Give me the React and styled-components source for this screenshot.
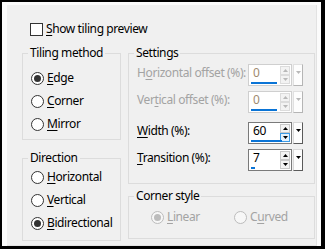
import React from "react";
import styled, { createGlobalStyle } from "styled-components";

const Global = createGlobalStyle`
  html, body { margin: 0; padding: 0; background: #fff; }
  body {
    font-family: "Segoe UI", "Noto Sans", "Open Sans", sans-serif;
    font-size: 12px;
    letter-spacing: -0.4px;
    color: #000;
  }
`;

const Frame = styled.div`
  width: 325px;
  height: 249px;
  box-sizing: border-box;
  border-style: solid;
  border-color: #000;
  border-width: 2px 4px 3px 2px;
  background: #fbfbfb;
  padding: 3px 4px 0 5px;
  display: flex;
`;

const Panel = styled.div`
  flex: 1;
  background: #f0f0f0;
  border-right: 1px solid #e2e2e2;
  border-bottom: 1px solid #e2e2e2;
  padding: 16px 1px 0 15px;
  display: flex;
  flex-direction: column;
`;

const Line = styled.label`
  display: flex;
  align-items: center;
  height: 16px;
  line-height: 16px;
  gap: 3px;
  white-space: nowrap;
  color: ${(p) => (p.$disabled ? "#a3a3a3" : "#000")};
`;

const TopRow = styled(Line)`
  margin-left: 8px;
`;

const Box = styled.span`
  width: 13px;
  height: 13px;
  box-sizing: border-box;
  border: 1px solid #333;
  background: #fff;
  flex: none;
`;

const Circle = styled.span`
  width: 13px;
  height: 13px;
  box-sizing: border-box;
  border-radius: 50%;
  border: 1px solid ${(p) => (p.$disabled ? "#bcbcbc" : "#333")};
  background: ${(p) => (p.$disabled ? "#f7f7f7" : "#fff")};
  flex: none;
  display: flex;
  align-items: center;
  justify-content: center;
  &::after {
    content: "";
    display: ${(p) => (p.$checked ? "block" : "none")};
    width: 7px;
    height: 7px;
    border-radius: 50%;
    background: ${(p) => (p.$disabled ? "#bcbcbc" : "#333")};
  }
`;

const Key = styled.span`
  text-decoration: underline;
  text-underline-offset: 2px;
`;

const Columns = styled.div`
  display: flex;
  gap: 7px;
  margin-top: 8px;
`;

const Column = styled.div`
  display: flex;
  flex-direction: column;
  width: ${(p) => p.$w}px;
  gap: ${(p) => p.$gap}px;
`;

const Group = styled.fieldset`
  margin: 0;
  min-width: 0;
  border: 1px solid #dcdcdc;
  padding: 0;
`;

const Legend = styled.legend`
  padding: 0 2px;
  margin-left: 5px;
  line-height: 16px;
  height: 16px;
`;

const Body = styled.div`
  padding: ${(p) => p.$pad};
  display: flex;
  flex-direction: column;
  gap: ${(p) => p.$gap || 0}px;
`;

const SettingRow = styled.div`
  display: flex;
  align-items: flex-start;
  justify-content: space-between;
  height: 22px;
  margin-top: ${(p) => p.$mt}px;
`;

const SettingLabel = styled.span`
  line-height: 16px;
  padding-top: 1px;
  white-space: nowrap;
  color: ${(p) => (p.$disabled ? "#a3a3a3" : "#000")};
`;

const Spin = styled.div`
  display: flex;
  width: 55px;
  height: 22px;
  flex: none;
`;

const Field = styled.div`
  position: relative;
  flex: 1;
  box-sizing: border-box;
  border: 1px solid ${(p) => (p.$disabled ? "#cfcfcf" : "#7a7a7a")};
  background: #fff;
  display: flex;
  padding-right: 1px;
`;

const Value = styled.span`
  flex: 1;
  line-height: 16px;
  padding-left: 4px;
  color: ${(p) => (p.$disabled ? "#a08a70" : "#000")};
`;

const Arrows = styled.div`
  display: flex;
  flex-direction: column;
  width: 10px;
  margin-top: 1px;
`;

const ArrowBtn = styled.div`
  height: 9px;
  box-sizing: border-box;
  border: 1px solid ${(p) => (p.$hot ? "#3c9be6" : p.$disabled ? "#dcdcdc" : "#c8c8c8")};
  background: ${(p) => (p.$hot ? "#e5f1fb" : "#f3f3f3")};
  display: flex;
  align-items: center;
  justify-content: center;
`;

const Bar = styled.span`
  position: absolute;
  left: 2px;
  bottom: 1px;
  height: 2px;
  background: #0a74d6;
`;

const Drop = styled.div`
  width: 10px;
  box-sizing: border-box;
  margin-left: 1px;
  background: #fdfdfd;
  border-style: solid;
  border-width: 1px;
  border-color: ${(p) =>
    p.$disabled ? "#e0e0e0 #b5b5b5 #b5b5b5 #e0e0e0" : "#d8d8d8 #5a5a5a #5a5a5a #d8d8d8"};
  display: flex;
  justify-content: center;
  padding-top: 6px;
`;

const CornerRadios = styled.div`
  display: grid;
  grid-template-columns: 83px 60px;
`;

const Tri = ({ up, color }) => (
  <svg width="5" height="3" viewBox="0 0 5 3">
    <path d={up ? "M0 3 L2.5 0 L5 3 Z" : "M0 0 L5 0 L2.5 3 Z"} fill={color} />
  </svg>
);

function Radio({ checked, disabled, children }) {
  return (
    <Line $disabled={disabled}>
      <Circle $checked={checked} $disabled={disabled} />
      <span>{children}</span>
    </Line>
  );
}

function SpinField({ value, min, max, disabled, hot }) {
  const frac = (value - min) / (max - min);
  const c = disabled ? "#b8b8b8" : "#000";
  return (
    <Spin>
      <Field $disabled={disabled}>
        <Value $disabled={disabled}>{value}</Value>
        <Arrows>
          <ArrowBtn $disabled={disabled}><Tri up color={c} /></ArrowBtn>
          <ArrowBtn $disabled={disabled} $hot={hot}><Tri color={c} /></ArrowBtn>
        </Arrows>
        <Bar style={{ width: Math.max(2, Math.round(frac * 52)) }} />
      </Field>
      <Drop $disabled={disabled}>
        <Tri color={c} />
      </Drop>
    </Spin>
  );
}

export default function App() {
  return (
    <>
      <Global />
      <Frame>
        <Panel>
          <TopRow>
            <Box />
            <span><Key>S</Key>how tiling preview</span>
          </TopRow>
          <Columns>
            <Column $w={99} $gap={10}>
              <Group>
                <Legend>Tiling method</Legend>
                <Body $pad="9px 0 7px 8px" $gap={7}>
                  <Radio checked><Key>E</Key>dge</Radio>
                  <Radio><Key>C</Key>orner</Radio>
                  <Radio><Key>M</Key>irror</Radio>
                </Body>
              </Group>
              <Group>
                <Legend>Direction</Legend>
                <Body $pad="3px 0 9px 8px" $gap={7}>
                  <Radio><Key>H</Key>orizontal</Radio>
                  <Radio><Key>V</Key>ertical</Radio>
                  <Radio checked><Key>B</Key>idirectional</Radio>
                </Body>
              </Group>
            </Column>
            <Column $w={187} $gap={4}>
              <Group>
                <Legend>Settings</Legend>
                <Body $pad="0 11px 12px 8px">
                  <SettingRow $mt={3}>
                    <SettingLabel $disabled>H<Key>o</Key>rizontal offset (%):</SettingLabel>
                    <SpinField value={0} min={-100} max={100} disabled />
                  </SettingRow>
                  <SettingRow $mt={5}>
                    <SettingLabel $disabled>Ver<Key>t</Key>ical offset (%):</SettingLabel>
                    <SpinField value={0} min={-100} max={100} disabled />
                  </SettingRow>
                  <SettingRow $mt={9}>
                    <SettingLabel><Key>W</Key>idth (%):</SettingLabel>
                    <SpinField value={60} min={0} max={100} hot />
                  </SettingRow>
                  <SettingRow $mt={5}>
                    <SettingLabel><Key>T</Key>ransition (%):</SettingLabel>
                    <SpinField value={7} min={0} max={100} />
                  </SettingRow>
                </Body>
              </Group>
              <Group>
                <Legend>Corner style</Legend>
                <Body $pad="5px 0 13px 22px">
                  <CornerRadios>
                    <Radio checked disabled><Key>L</Key>inear</Radio>
                    <Radio disabled>C<Key>u</Key>rved</Radio>
                  </CornerRadios>
                </Body>
              </Group>
            </Column>
          </Columns>
        </Panel>
      </Frame>
    </>
  );
}
